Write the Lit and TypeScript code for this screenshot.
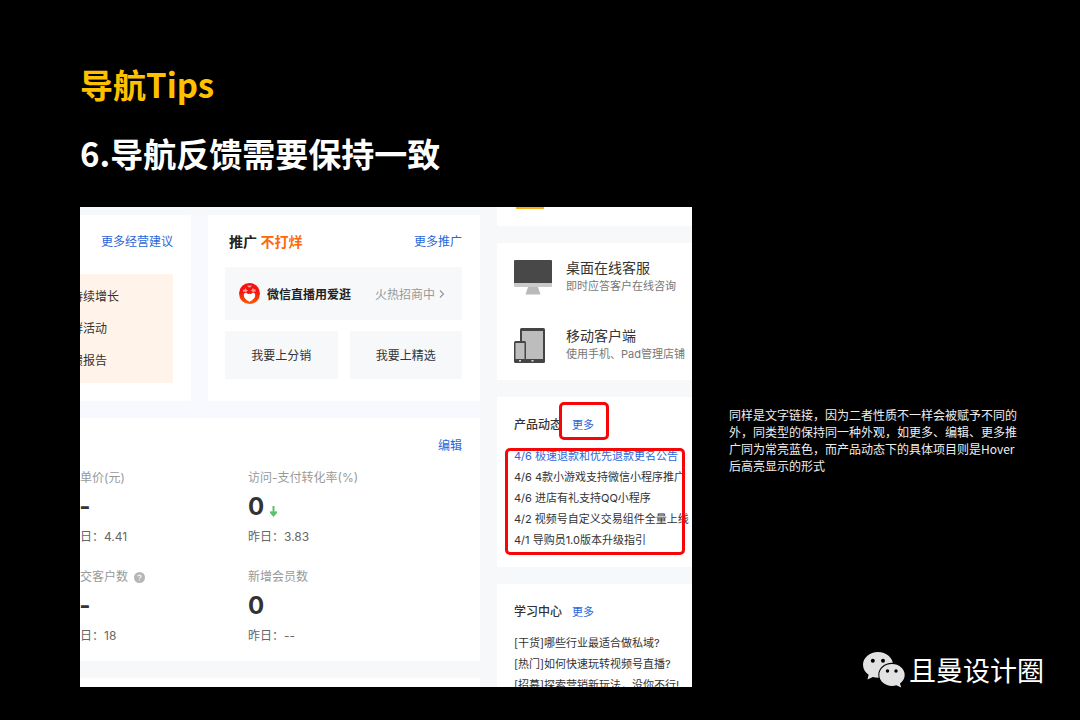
import { LitElement, html, css, svg, nothing } from "lit";
import { customElement, property } from "lit/decorators.js";

const base = css`
  :host {
    display: block;
    box-sizing: border-box;
  }
  * {
    box-sizing: border-box;
  }
  a {
    color: inherit;
    text-decoration: none;
  }
  h1, h2, h3, p, ul, dl, dd, dt {
    margin: 0;
    padding: 0;
    font-weight: 400;
  }
  ul {
    list-style: none;
  }
  svg {
    display: block;
    flex: none;
  }
  .link {
    color: #2b66d9;
  }
`;

interface Metric {
  label: string;
  value: string;
  yesterday: string;
  help?: boolean;
  down?: boolean;
}

const suggestions = ["持续增长", "群活动", "馈报告"];

const metrics: Metric[] = [
  { label: "客单价(元)", value: "--", yesterday: "4.41" },
  { label: "访问-支付转化率(%)", value: "0", yesterday: "3.83", down: true },
  { label: "成交客户数", value: "--", yesterday: "18", help: true },
  { label: "新增会员数", value: "0", yesterday: "--" },
];

const news = [
  "4/6 极速退款和优先退款更名公告",
  "4/6 4款小游戏支持微信小程序推广",
  "4/6 进店有礼支持QQ小程序",
  "4/2 视频号自定义交易组件全量上线",
  "4/1 导购员1.0版本升级指引",
];

const lessons = [
  "[干货]哪些行业最适合做私域?",
  "[热门]如何快速玩转视频号直播?",
  "[招募]探索营销新玩法，没你不行!",
];

const monitorIcon = svg`
  <svg width="38" height="37" viewBox="0 0 38 37" aria-hidden="true">
    <rect x="0" y="2" width="38" height="24" rx="1" fill="#484848" />
    <path d="M0 25H38V28Q38 29 37 29H1Q0 29 0 28Z" fill="#c9c9c9" />
    <path d="M14 29H24L26.500 36.500H11.500Z" fill="#b9b9b9" />
  </svg>`;

const tabletIcon = svg`
  <svg width="38" height="37" viewBox="0 0 38 37" aria-hidden="true">
    <rect x="6" y="2" width="25" height="35" rx="1.500" fill="#444" />
    <rect x="8" y="5" width="21" height="28" fill="#bdbdbd" />
    <rect x="0" y="15" width="12" height="22" rx="1.500" fill="#444" />
    <rect x="1.500" y="17" width="9" height="16" fill="#bdbdbd" />
    <rect x="5" y="34" width="2" height="1.500" fill="#ddd" />
    <rect x="17.500" y="34" width="2" height="1.500" fill="#ddd" />
  </svg>`;

@customElement("promo-card")
export class PromoCard extends LitElement {
  static styles = [
    base,
    css`
      :host {
        background: #fff;
        padding: 17px 18px 22px 17px;
      }
      .head {
        display: flex;
        justify-content: space-between;
        line-height: 20px;
        padding-left: 4px;
        margin-bottom: 15px;
      }
      .title {
        font-size: 14px;
        font-weight: 600;
        color: #222;
      }
      .accent {
        color: #fa6a0a;
      }
      .banner {
        display: flex;
        align-items: center;
        height: 53px;
        padding: 0 17px 0 14px;
        background: #f7f8fa;
        color: #999;
        margin-bottom: 11px;
      }
      .name {
        margin: 0 auto 0 7px;
        font-weight: 600;
        color: #222;
      }
      .chevron {
        margin-left: 4px;
      }
      .actions {
        display: grid;
        grid-template-columns: 1fr 1fr;
        gap: 12px;
      }
      .action {
        height: 48px;
        border: 0;
        padding: 0 0 2px;
        background: #f7f8fa;
        color: #333;
        font: inherit;
      }
    `,
  ];

  render() {
    return html`
      <div class="head">
        <h3 class="title">推广 <span class="accent">不打烊</span></h3>
        <a class="link" href="#promo">更多推广</a>
      </div>
      <a class="banner" href="#live">
        <svg width="21" height="21" viewBox="0 0 21 21" aria-hidden="true">
          <defs>
            <linearGradient id="g" x1="0" y1="0" x2="0" y2="1">
              <stop offset="0.400" stop-color="#f5120f" />
              <stop offset="1" stop-color="#ff5a00" />
            </linearGradient>
          </defs>
          <circle cx="10.500" cy="10.500" r="10.500" fill="url(#g)" />
          <path d="M10.500 18.800C6.300 16.800 4.800 14.300 4.800 12.200C4.800 10 6.200 9.500 7.600 9.900Q9 11.600 10.500 10.800Q12 11.600 13.400 9.900C14.800 9.500 16.200 10 16.200 12.200C16.200 14.300 14.700 16.800 10.500 18.800Z" fill="#fff" />
          <path d="M3.800 7l2-.6.8-1.600.9 1.900 1.700.8-1.500.8L7 9.400 5.600 8.600 4.300 8.900ZM16.600 6.500l-1.800-.3-.9-1.500-.8 1.900-1.500 1 1.500.6.9 1.200 1-.9 1.500.3ZM8.400 2.500a2.100 2.100 0 0 0 4.200 0Z" fill="#ff9c95" />
        </svg>
        <span class="name">微信直播用爱逛</span>
        <span>火热招商中</span>
        <svg class="chevron" width="6" height="10" viewBox="0 0 6 10" aria-hidden="true">
          <path d="M1 1.500L4.500 5L1 8.500" fill="none" stroke="#999" stroke-width="1.200" />
        </svg>
      </a>
      <div class="actions">
        <button class="action" type="button">我要上分销</button>
        <button class="action" type="button">我要上精选</button>
      </div>
    `;
  }
}

@customElement("metrics-card")
export class MetricsCard extends LitElement {
  static styles = [
    base,
    css`
      :host {
        background: #fff;
        padding: 19px 18px 15px 0;
      }
      .head {
        display: flex;
        justify-content: flex-end;
        line-height: 18px;
        margin-bottom: 13px;
      }
      .grid {
        display: grid;
        grid-template-columns: 180fr 214fr;
        row-gap: 20px;
        margin-left: -12px;
      }
      .label {
        display: flex;
        align-items: center;
        gap: 6px;
        line-height: 20px;
        color: #999;
      }
      .value {
        display: flex;
        align-items: center;
        gap: 6px;
        margin: 5px 0 6px;
        line-height: 28px;
        font-size: 24px;
        font-weight: 700;
        color: #333;
      }
      .arrow {
        margin-top: 8px;
      }
      .yesterday {
        line-height: 20px;
        color: #666;
      }
    `,
  ];

  render() {
    return html`
      <div class="head"><a class="link" href="#edit">编辑</a></div>
      <div class="grid">
        ${metrics.map(
          (m) => html`
            <dl>
              <dt class="label">
                ${m.label}
                ${m.help
                  ? html`<svg width="11" height="11" viewBox="0 0 10 10" aria-hidden="true">
                      <circle cx="5" cy="5" r="5" fill="#b5b5b5" />
                      <path d="M3.500 4Q3.600 2.700 5 2.700T6.500 3.900Q6.500 4.600 5.700 5Q5 5.300 5 6M5 6.900V7.800" fill="none" stroke="#fff" stroke-width="1" />
                    </svg>`
                  : nothing}
              </dt>
              <dd class="value">
                ${m.value}
                ${m.down
                  ? html`<svg class="arrow" width="7" height="11" viewBox="0 0 7 11" aria-hidden="true">
                      <path d="M2.500 0H4.500V5.500L7 5.200V7L3.500 11L0 7V5.200L2.500 5.500Z" fill="#5fc06c" />
                    </svg>`
                  : nothing}
              </dd>
              <dd class="yesterday">昨日：${m.yesterday}</dd>
            </dl>
          `
        )}
      </div>
    `;
  }
}

@customElement("feed-card")
export class FeedCard extends LitElement {
  @property() heading = "";
  @property({ attribute: false }) items: string[] = [];
  @property({ type: Boolean }) marked = false;

  static styles = [
    base,
    css`
      :host {
        background: #fff;
        padding: 18px 0 16px 17px;
        font-size: 11px;
        color: #333;
      }
      .head {
        display: flex;
        align-items: center;
        gap: 10px;
        line-height: 20px;
        margin-bottom: 11px;
      }
      .title {
        font-size: 12px;
        font-weight: 500;
      }
      .more,
      .list {
        position: relative;
      }
      .item {
        line-height: 21px;
        white-space: nowrap;
      }
      .mark {
        position: absolute;
        border: 3px solid #f60606;
        border-radius: 5px;
        pointer-events: none;
      }
      .around-more {
        inset: -13px -15px -5px -13px;
      }
      .around-list {
        inset: 2px 7px -4px -9px;
      }
    `,
  ];

  render() {
    return html`
      <div class="head">
        <h3 class="title">${this.heading}</h3>
        <span class="more">
          <a class="link" href="#more">更多</a>
          ${this.marked ? html`<span class="mark around-more"></span>` : nothing}
        </span>
      </div>
      <div class="list">
        <ul>
          ${this.items.map(
            (text, i) => html`<li class="item">
              <a class=${this.marked && i === 0 ? "link" : ""} href="#item">${text}</a>
            </li>`
          )}
        </ul>
        ${this.marked ? html`<span class="mark around-list"></span>` : nothing}
      </div>
    `;
  }
}

@customElement("app-root")
export class AppRoot extends LitElement {
  static styles = [
    base,
    css`
      :host {
        position: relative;
        min-height: 100vh;
        padding: 64px 56px 33px 80px;
        background: #000;
        color: #fff;
        font-family: "Noto Sans CJK SC", sans-serif;
      }
      .heading {
        font-size: 33px;
        line-height: 40px;
        font-weight: 700;
      }
      .topic {
        color: #ffc000;
        margin-bottom: 29px;
      }
      .body {
        display: grid;
        grid-template-columns: minmax(0, 612fr) minmax(0, 295fr);
        column-gap: 37px;
        margin-top: 34px;
      }
      .shot {
        display: grid;
        grid-template-columns: minmax(0, 400fr) minmax(0, 195fr);
        column-gap: 17px;
        aspect-ratio: 51 / 40;
        overflow: hidden;
        background: #f7f8fa;
        color: #333;
        font-family: Inter, "Noto Sans CJK SC", sans-serif;
        font-size: 12px;
      }
      .main,
      .side {
        display: flex;
        flex-direction: column;
        min-height: 0;
      }
      .side {
        gap: 17px;
      }
      .main {
        padding-top: 8px;
      }
      .row {
        display: grid;
        grid-template-columns: minmax(0, 111fr) minmax(0, 272fr);
        column-gap: 17px;
        padding-bottom: 17px;
        background: #f7f9fe;
      }
      .card {
        background: #fff;
      }
      .advice {
        padding: 17px 18px 18px 0;
      }
      .advice-head {
        display: flex;
        justify-content: flex-end;
        line-height: 20px;
        margin-bottom: 22px;
        white-space: nowrap;
      }
      .advice-list {
        padding: 7px 0 6px;
        background: #fff3ea;
      }
      .advice-item {
        margin-left: -9px;
        line-height: 32px;
      }
      .next {
        flex: 1;
        margin-top: 17px;
      }
      .cut {
        flex: none;
        height: 19px;
        padding-left: 19px;
      }
      .strip {
        width: 28px;
        height: 2px;
        background: #fbb01b;
      }
      .clients {
        display: grid;
        row-gap: 31px;
        padding: 15px 0 17px 17px;
      }
      .client {
        display: flex;
        gap: 14px;
        white-space: nowrap;
      }
      .client-name {
        font-size: 14px;
        line-height: 20px;
      }
      .client-note {
        font-size: 11px;
        line-height: 17px;
        color: #777;
      }
      .note {
        align-self: center;
        padding-bottom: 14px;
        font-size: 12px;
        line-height: 17px;
        color: #eee;
      }
      .brand {
        position: absolute;
        right: 36px;
        bottom: 32px;
        display: flex;
        align-items: center;
        gap: 4px;
        font-size: 27px;
        line-height: 36px;
      }
    `,
  ];

  render() {
    return html`
      <h1 class="heading topic">导航Tips</h1>
      <h2 class="heading">6.导航反馈需要保持一致</h2>
      <div class="body">
        <div class="shot">
          <div class="main">
            <div class="row">
              <div class="card advice">
                <div class="advice-head"><a class="link" href="#advice">更多经营建议</a></div>
                <ul class="advice-list">
                  ${suggestions.map((s) => html`<li class="advice-item">${s}</li>`)}
                </ul>
              </div>
              <promo-card></promo-card>
            </div>
            <metrics-card></metrics-card>
            <div class="card next"></div>
          </div>
          <div class="side">
            <div class="card cut"><div class="strip"></div></div>
            <div class="card clients">
              <div class="client">
                ${monitorIcon}
                <div>
                  <p class="client-name">桌面在线客服</p>
                  <p class="client-note">即时应答客户在线咨询</p>
                </div>
              </div>
              <div class="client">
                ${tabletIcon}
                <div>
                  <p class="client-name">移动客户端</p>
                  <p class="client-note">使用手机、Pad管理店铺</p>
                </div>
              </div>
            </div>
            <feed-card heading="产品动态" .items=${news} marked></feed-card>
            <feed-card heading="学习中心" .items=${lessons}></feed-card>
          </div>
        </div>
        <p class="note">
          同样是文字链接，因为二者性质不一样会被赋予不同的外，同类型的保持同一种外观，如更多、编辑、更多推广同为常亮蓝色，而产品动态下的具体项目则是Hover后高亮显示的形式
        </p>
      </div>
      <div class="brand">
        <svg width="42" height="36" viewBox="0 0 42 36" aria-hidden="true">
          <path d="M15 0C6.700 0 0 5.700 0 12.800C0 16.900 2.200 20.400 5.600 22.800L4.500 27.500L9.800 24.900Q12.400 25.700 15 25.700C23.300 25.700 30 19.900 30 12.800S23.300 0 15 0Z" fill="#e2e2e2" />
          <path d="M29 10.800C21.500 10.800 15.300 16.200 15.300 23S21.500 35.200 29 35.200Q31.300 35.200 33.500 34.500L38.500 36.600L37.500 32.600C40.500 30.400 42.500 26.900 42.500 23C42.500 16.200 36.500 10.800 29 10.800Z" fill="#000" />
          <path d="M29 12C22 12 16.300 16.900 16.300 23S22 33.900 29 33.900Q31.200 33.900 33.400 33.200L38.200 35.500L37 31.500C39.800 29.500 41.700 26.500 41.700 23C41.700 16.900 36 12 29 12Z" fill="#e2e2e2" />
          <g fill="#000">
            <circle cx="9.800" cy="8.700" r="2" />
            <circle cx="20" cy="8.700" r="2" />
            <circle cx="24.500" cy="19" r="1.700" />
            <circle cx="33" cy="19" r="1.700" />
          </g>
        </svg>
        <span>且曼设计圈</span>
      </div>
    `;
  }
}
